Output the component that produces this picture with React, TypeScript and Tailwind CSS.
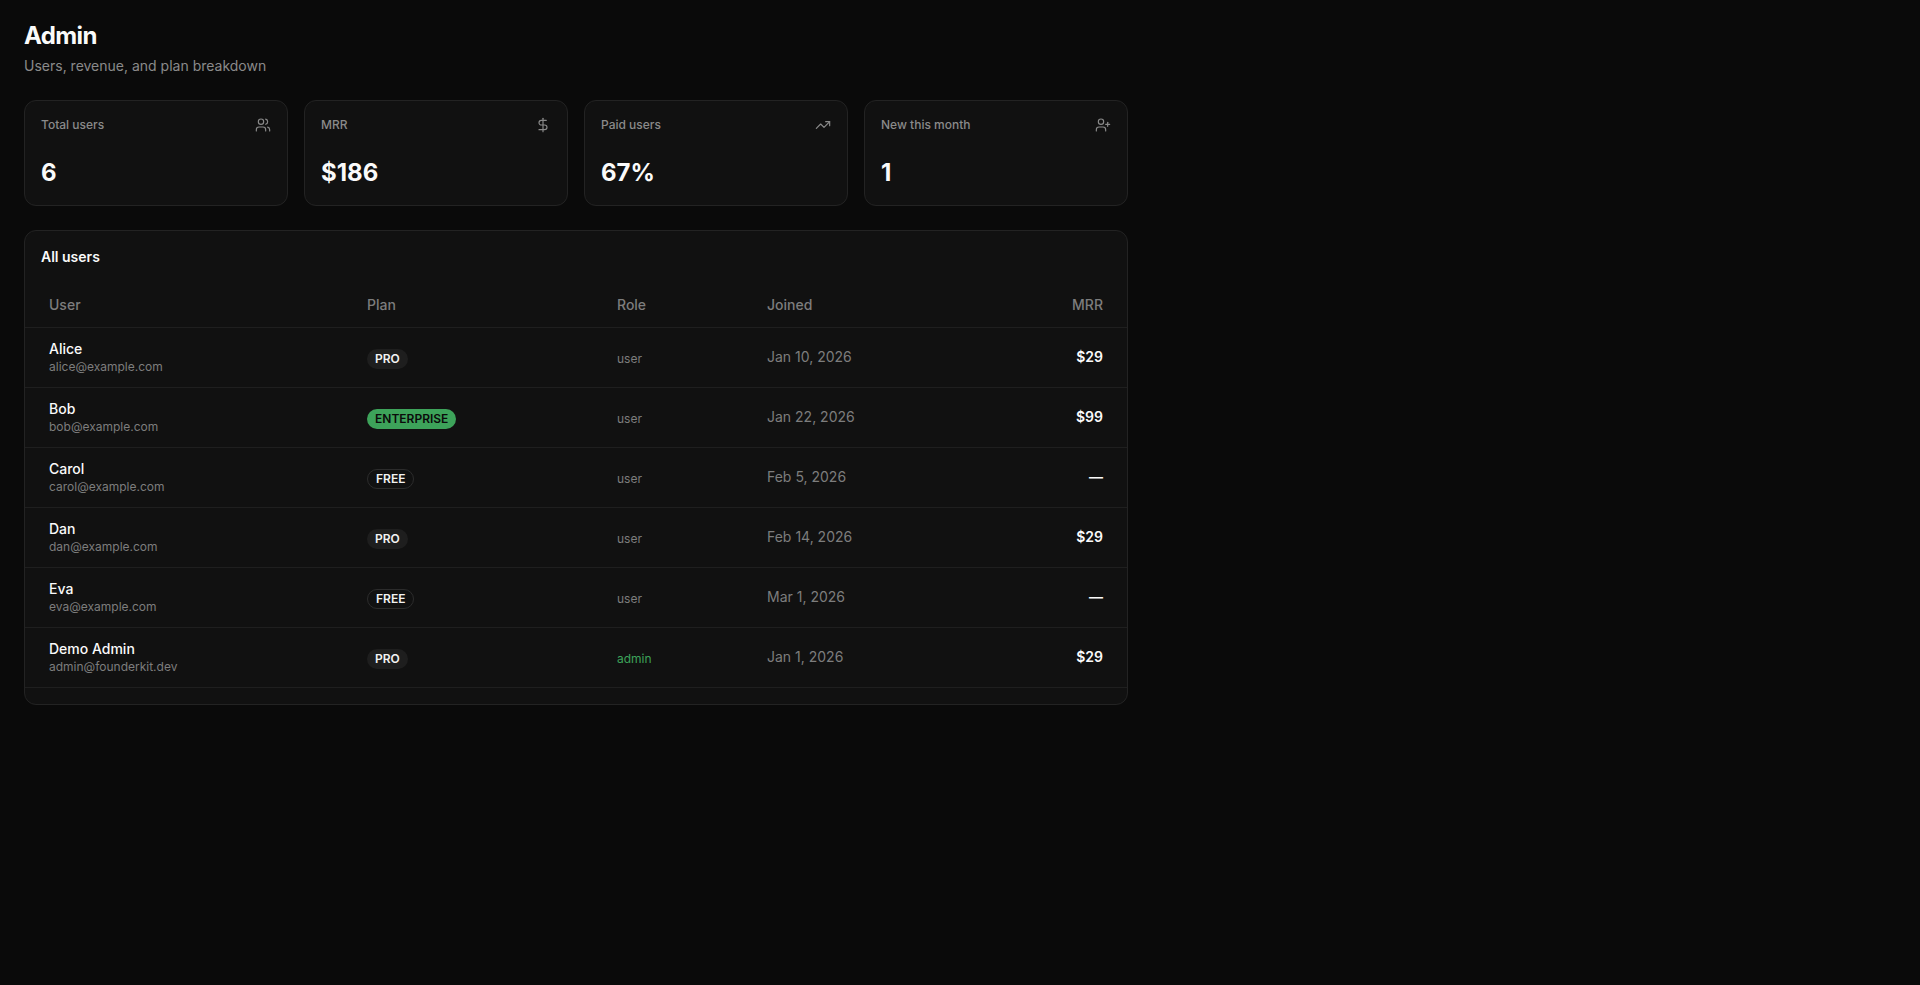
import { Users, DollarSign, TrendingUp, UserPlus } from "lucide-react";

type Plan = "pro" | "enterprise" | "free";

const stats = [
  { label: "Total users", value: "6", Icon: Users },
  { label: "MRR", value: "$186", Icon: DollarSign },
  { label: "Paid users", value: "67%", Icon: TrendingUp },
  { label: "New this month", value: "1", Icon: UserPlus },
];

const users: {
  name: string;
  email: string;
  plan: Plan;
  role: string;
  joined: string;
  mrr: string;
}[] = [
  { name: "Alice", email: "alice@example.com", plan: "pro", role: "user", joined: "Jan 10, 2026", mrr: "$29" },
  { name: "Bob", email: "bob@example.com", plan: "enterprise", role: "user", joined: "Jan 22, 2026", mrr: "$99" },
  { name: "Carol", email: "carol@example.com", plan: "free", role: "user", joined: "Feb 5, 2026", mrr: "—" },
  { name: "Dan", email: "dan@example.com", plan: "pro", role: "user", joined: "Feb 14, 2026", mrr: "$29" },
  { name: "Eva", email: "eva@example.com", plan: "free", role: "user", joined: "Mar 1, 2026", mrr: "—" },
  { name: "Demo Admin", email: "admin@founderkit.dev", plan: "pro", role: "admin", joined: "Jan 1, 2026", mrr: "$29" },
];

function PlanBadge({ plan }: { plan: Plan }) {
  if (plan === "enterprise") {
    return (
      <span className="inline-flex h-5 items-center rounded-full bg-[#3da35a] px-2 text-xs font-semibold text-[#0b0b0b]">
        ENTERPRISE
      </span>
    );
  }
  if (plan === "free") {
    return (
      <span className="inline-flex h-5 items-center rounded-full border border-[#2c2c2c] px-2 text-xs font-semibold text-[#f2f2f2]">
        FREE
      </span>
    );
  }
  return (
    <span className="inline-flex h-5 items-center rounded-full bg-[#1e1e1e] px-2 text-xs font-semibold text-[#f2f2f2]">
      PRO
    </span>
  );
}

export default function App() {
  return (
    <div className="min-h-screen bg-[#0a0a0a] font-['Inter',sans-serif] text-[#fafafa]">
      <div className="max-w-6xl px-6 pt-5 pb-6">
        <h1 className="text-2xl font-bold tracking-tight">Admin</h1>
        <p className="mt-1 text-sm text-[#8a8a8a]">Users, revenue, and plan breakdown</p>

        <div className="mt-6 grid grid-cols-4 gap-4">
          {stats.map(({ label, value, Icon }) => (
            <div key={label} className="rounded-xl border border-[#232323] bg-[#111111] p-4">
              <div className="flex h-4 items-center justify-between">
                <span className="text-xs font-medium text-[#8a8a8a]">{label}</span>
                <Icon className="h-4 w-4 text-[#8a8a8a]" strokeWidth={1.75} />
              </div>
              <div className="mt-6 text-2xl font-bold">{value}</div>
            </div>
          ))}
        </div>

        <div className="mt-6 rounded-xl border border-[#232323] bg-[#111111] pb-4">
          <h2 className="px-4 pt-4 text-sm font-semibold">All users</h2>
          <table className="mt-4 w-full table-fixed text-left">
            <colgroup>
              <col className="w-[318px]" />
              <col className="w-[250px]" />
              <col className="w-[150px]" />
              <col className="w-[200px]" />
              <col />
            </colgroup>
            <thead>
              <tr className="border-b border-[#1f1f1f]">
                <th className="h-11 px-6 text-sm font-medium text-[#7d7d7d]">User</th>
                <th className="h-11 px-6 text-sm font-medium text-[#7d7d7d]">Plan</th>
                <th className="h-11 px-6 text-sm font-medium text-[#7d7d7d]">Role</th>
                <th className="h-11 px-6 text-sm font-medium text-[#7d7d7d]">Joined</th>
                <th className="h-11 px-6 text-right text-sm font-medium text-[#7d7d7d]">MRR</th>
              </tr>
            </thead>
            <tbody>
              {users.map((u) => (
                <tr key={u.email} className="border-b border-[#1f1f1f]">
                  <td className="h-[60px] px-6">
                    <div className="text-sm font-medium leading-5">{u.name}</div>
                    <div className="text-xs text-[#7d7d7d]">{u.email}</div>
                  </td>
                  <td className="px-6">
                    <PlanBadge plan={u.plan} />
                  </td>
                  <td className="px-6">
                    <span className={u.role === "admin" ? "text-xs text-[#3da35a]" : "text-xs text-[#7d7d7d]"}>
                      {u.role}
                    </span>
                  </td>
                  <td className="px-6 text-sm text-[#7d7d7d]">{u.joined}</td>
                  <td className="px-6 text-right text-sm font-semibold">{u.mrr}</td>
                </tr>
              ))}
            </tbody>
          </table>
        </div>
      </div>
    </div>
  );
}
